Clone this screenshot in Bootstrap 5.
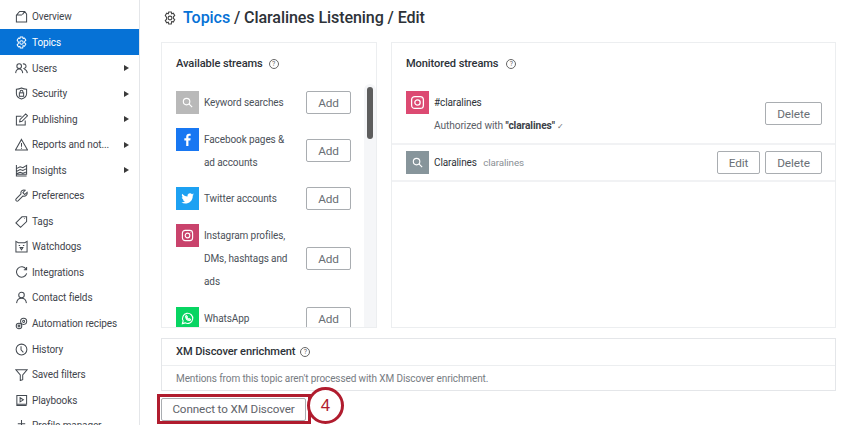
<!DOCTYPE html>
<html lang="en"><head><meta charset="utf-8"><title>Topics</title>
<link rel="stylesheet" href="https://cdn.jsdelivr.net/npm/bootstrap@5.3.0/dist/css/bootstrap.min.css">
<style>
html,body{height:425px;overflow:hidden}
body{font-family:Roboto,"Noto Sans",sans-serif;font-size:10px;color:#4b5159;background:#fff;letter-spacing:-.1px}
.shell{height:425px;position:relative}
.side{width:140px;flex:none;border-right:1px solid #e4e6e9;padding-top:3.7px;overflow:hidden}
.side-item{flex:none;height:25.55px;padding:1px 10px 0 15px;color:#3f454c;text-decoration:none;gap:4px;white-space:nowrap}
.side-item svg{width:13px;height:13px;flex:none;fill:none;stroke:#444a51;stroke-width:1.1}
.side-item.on{background:#0672d6;color:#fff}
.side-item.on svg{stroke:#fff}
.caret{width:0;height:0;border-left:5px solid #3a3a3a;border-top:3.5px solid transparent;border-bottom:3.5px solid transparent}
.workspace{padding:0 14px 0 21px;min-width:0}
.crumb{height:42px;gap:6px;font-size:16.1px;font-weight:500;color:#2d3238;padding-left:2px;padding-bottom:6px}
.crumb a{color:#0672d6;text-decoration:none}
.crumb svg{width:14px;height:14px;fill:none;stroke:#444;stroke-width:1.1}
.panes{height:286px;gap:14px}
.pane{border:1px solid #eceef0;background:#fff;min-width:0}
.pane-left{width:216px;flex:none;overflow:hidden}
.pane-right{flex:1}
.pane-title{font-size:11.1px;font-weight:500;color:#2d3238;gap:6px;height:20px}
.qmark{width:10px;height:10px;border:1px solid #666;border-radius:50%;font-size:7px;line-height:8px;text-align:center;color:#666;display:inline-block;font-weight:400;letter-spacing:0}
.qmark-near{margin-left:2px}
.stream-scroll{flex:1;padding:11px 0 0 14px;overflow:hidden;min-width:0}
.track{width:12px;flex:none;background:#f5f6f8;margin-top:41px;padding:3px 3px 0;border-radius:6px 6px 0 0}
.thumb{height:52px;border-radius:3px;background:#5d5d5d}
.stream-row{gap:5px;margin-bottom:13.7px;width:175px}
.glyph{width:23px;height:23px;flex:none}
.glyph svg{width:13px;height:13px;fill:none;stroke:#fff;stroke-width:1.2}
.g-gray{background:#b9b9b9}.g-fb{background:#1877f2}.g-tw{background:#1da1f2}.g-ig{background:#c9436c}.g-wa{background:#07d562}.g-ig2{background:#dc4a72}.g-slate{background:#87959b}
.stream-name{flex:1;line-height:23px;color:#4b5159;min-width:0}
.ghost{height:23px;padding:1px 0 0;border:1px solid #a9adb1;border-radius:2px;background:#fff;color:#6a6f75;font-size:11.8px;line-height:20px;flex:none;letter-spacing:-.1px}
.ghost:hover{background:#fff;color:#6a6f75;border-color:#a9adb1}
.w-add{width:45px}.w-del{width:57px}.w-edit{width:43px}
.mon-head{padding:11px 14px 0}
.mon-row{padding:0 13px 0 14px;border-bottom:2px solid #f1f2f4}
.mon-one{height:54px;margin-top:17px;gap:5px}
.mon-two{height:37px;padding-top:6px;gap:5px}
.mon-name{color:#2d3238;line-height:23px}
.mon-del{margin-top:11px}
.auth{font-size:10.2px;line-height:12px;margin-top:6px;color:#5b6067}
.auth b{font-weight:700;color:#3c4147}
.tick{font-size:8px;color:#6a6f75}
.muted-note{color:#8a8f95;font-size:9.8px;margin-left:4px}
.ig-big{width:15px!important;height:15px!important}
.list-top{margin-bottom:17px}
.enrich{border:1px solid #e4e6e9;margin-top:10px;height:53px}
.enrich-head{height:27px;border-bottom:1px solid #eceef0;padding:0 14px;font-size:11.1px;font-weight:500;color:#2d3238;gap:5px}
.enrich-body{padding:0 14px;height:25px;font-size:10px;color:#777c82}
.connect{margin-top:7px;width:145px;height:23px;border:1px solid #a9adb1;border-radius:2px;background:#fff;color:#5f646a;font-size:11.65px;letter-spacing:-.1px;padding:0;display:block}
.connect:hover{background:#fff;color:#5f646a;border-color:#a9adb1}
.callout-box{position:absolute;left:157px;top:394px;width:154px;height:30px;border:3px solid #b01c2e;pointer-events:none}
.callout-num{position:absolute;left:307px;top:387px;width:37px;height:37px;border:3px solid #b01c2e;border-radius:50%;background:#fff;color:#b01c2e;font-size:17px;line-height:32px;text-align:center;font-family:"Liberation Sans",sans-serif}
</style></head>
<body>
<div class="shell d-flex">
<nav class="side d-flex flex-column">
<a class="side-item d-flex align-items-center" href="#"><svg viewBox="0 0 14 14"><path d="M1.5 13V5.500L5 1.500h5.500l2 3V13zM1.500 5.500h6M10.500 1.500 8 5"/></svg>Overview</a>
<a class="side-item on d-flex align-items-center" href="#"><svg viewBox="0 0 14 14"><path d="M5.700 1h2.600l.4 1.800 1.600-.6 1.400 2.300-1.300 1.300v1.600l1.300 1.300-1.400 2.300-1.600-.6L8.300 13H5.700l-.4-1.800-1.600.6-1.400-2.300 1.300-1.300V6.400L2.300 4.500l1.400-2.300 1.600.6z"/><circle cx="7" cy="7" r="1.900"/></svg>Topics</a>
<a class="side-item d-flex align-items-center" href="#"><svg viewBox="0 0 14 14"><circle cx="4.500" cy="4.500" r="2.500"/><path d="M.7 12c.3-3 1.800-4.500 3.800-4.500S8 9 8.300 12M8.500 2.200a2.500 2.500 0 1 1 .5 4.800M10 7.800c1.800.4 3 1.900 3.300 4.200"/></svg>Users<span class="caret ms-auto"></span></a>
<a class="side-item d-flex align-items-center" href="#"><svg viewBox="0 0 14 14"><path d="M7 1c2 1 3.500 1.300 5.500 1.300V7c0 3-2.500 5-5.500 6-3-1-5.500-3-5.500-6V2.300C3.500 2.300 5 2 7 1z"/><rect x="4.700" y="6.300" width="4.600" height="3.700"/><path d="M5.500 6.300V5a1.500 1.500 0 0 1 3 0v1.300"/></svg>Security<span class="caret ms-auto"></span></a>
<a class="side-item d-flex align-items-center" href="#"><svg viewBox="0 0 14 14"><path d="M11 8v5H1.500V3.500H7M5 9.500l.5-2.500L11.500 1l2 2-6 6z"/></svg>Publishing<span class="caret ms-auto"></span></a>
<a class="side-item d-flex align-items-center" href="#"><svg viewBox="0 0 14 14"><path d="M7 1.500 13.500 13H.5zM7 5.500v4M7 10.500v1"/></svg>Reports and not...<span class="caret ms-auto"></span></a>
<a class="side-item d-flex align-items-center" href="#"><svg viewBox="0 0 14 14"><path d="M1.500 1v12h11M1.500 5l4-2 3 1 4-2.500v9.500h-11M1.500 8l4-2 3 1 4-2M1.500 10.500l4-1.500 3 1 4-1.500"/></svg>Insights<span class="caret ms-auto"></span></a>
<a class="side-item d-flex align-items-center" href="#"><svg viewBox="0 0 14 14"><path d="M13 3.500 10.500 6 8.500 4l2.500-2.700a3.300 3.300 0 0 0-4.500 4L1.200 10.700a1.500 1.500 0 0 0 2.100 2.100L8.700 7.500a3.300 3.300 0 0 0 4.300-4z"/></svg>Preferences</a>
<a class="side-item d-flex align-items-center" href="#"><svg viewBox="0 0 14 14"><path d="M1 8.500 7.500 2h5v5L6 13.200zM10.500 3.500l-.5.500"/></svg>Tags</a>
<a class="side-item d-flex align-items-center" href="#"><svg viewBox="0 0 14 14"><path d="M1 1.500 3.500 3h7L13 1.500V13H1zM4 6h1.500M8.500 6H10M5.500 8h3L7 10.500z"/></svg>Watchdogs</a>
<a class="side-item d-flex align-items-center" href="#"><svg viewBox="0 0 14 14"><path d="M12 3.500A5.600 5.600 0 1 0 12.600 8M12.500 1v3h-3"/></svg>Integrations</a>
<a class="side-item d-flex align-items-center" href="#"><svg viewBox="0 0 14 14"><circle cx="7" cy="4.300" r="3"/><path d="M1.700 13c.4-3.300 2.500-5.200 5.300-5.200s4.900 1.900 5.300 5.200"/></svg>Contact fields</a>
<a class="side-item d-flex align-items-center" href="#"><svg viewBox="0 0 14 14"><circle cx="9.300" cy="4.700" r="3.300"/><circle cx="9.300" cy="4.700" r="1.100"/><circle cx="4.300" cy="9.700" r="3"/><circle cx="4.300" cy="9.700" r="1"/></svg>Automation recipes</a>
<a class="side-item d-flex align-items-center" href="#"><svg viewBox="0 0 14 14"><circle cx="7" cy="7" r="5.800"/><path d="M6.500 3.500V7.300l2.500 2.700"/></svg>History</a>
<a class="side-item d-flex align-items-center" href="#"><svg viewBox="0 0 14 14"><path d="M1 2h12L8.300 7.500v5l-2.600 1V7.500z"/></svg>Saved filters</a>
<a class="side-item d-flex align-items-center" href="#"><svg viewBox="0 0 14 14"><path d="M2 1.500h10.500v9.500H2zM2 11v1.500h10.500M5.500 4l3.500 2.300-3.500 2.200z"/></svg>Playbooks</a>
<a class="side-item d-flex align-items-center" href="#"><svg viewBox="0 0 14 14"><path d="M7 1v12M3 5h8"/></svg>Profile manager</a>
</nav>
<main class="workspace flex-grow-1 d-flex flex-column">
<div class="crumb d-flex align-items-center"><svg viewBox="0 0 14 14"><path d="M5.700 1h2.600l.4 1.800 1.600-.6 1.400 2.300-1.300 1.300v1.600l1.300 1.300-1.400 2.300-1.600-.6L8.300 13H5.700l-.4-1.800-1.600.6-1.400-2.300 1.300-1.300V6.400L2.300 4.500l1.400-2.300 1.600.6z"/><circle cx="7" cy="7" r="1.900"/></svg><span><a href="#">Topics</a> / Claralines Listening / Edit</span></div>
<div class="panes d-flex">
<section class="pane pane-left d-flex">
<div class="stream-scroll">
<div class="pane-title list-top d-flex align-items-center">Available streams <span class="qmark">?</span></div>
<div class="stream-row d-flex align-items-center"><span class="glyph g-gray d-flex align-items-center justify-content-center align-self-start"><svg viewBox="0 0 14 14"><circle cx="6" cy="6" r="3.500"/><path d="m8.500 8.500 3.500 3.500"/></svg></span><span class="stream-name">Keyword searches</span><button class="btn ghost w-add">Add</button></div>
<div class="stream-row d-flex align-items-center"><span class="glyph g-fb d-flex align-items-center justify-content-center align-self-start"><svg viewBox="0 0 14 14"><path d="M8 14V8h2l.4-2.400H8V4.200c0-.8.300-1.200 1.200-1.200h1.200V.9C10 .8 9.400.7 8.700.7 6.800.7 5.600 1.900 5.600 4v1.600H3.600V8h2v6z" fill="#fff" stroke="none"/></svg></span><span class="stream-name">Facebook pages &amp;<br>ad accounts</span><button class="btn ghost w-add">Add</button></div>
<div class="stream-row d-flex align-items-center"><span class="glyph g-tw d-flex align-items-center justify-content-center align-self-start"><svg viewBox="0 0 14 14"><path d="M14 2.700c-.5.200-1 .4-1.600.4.600-.3 1-.9 1.200-1.500-.5.300-1.100.5-1.800.7a2.800 2.800 0 0 0-4.800 2.500C4.700 4.700 2.700 3.600 1.300 1.900c-.7 1.300-.4 2.900.9 3.700-.5 0-.9-.1-1.300-.3 0 1.300 1 2.500 2.300 2.800-.4.100-.9.100-1.300 0 .4 1.100 1.400 1.900 2.600 1.900A5.700 5.700 0 0 1 .3 11.200c4.600 2.800 12.500.8 12.400-7.500.5-.3 1-.6 1.300-1z" fill="#fff" stroke="none"/></svg></span><span class="stream-name">Twitter accounts</span><button class="btn ghost w-add">Add</button></div>
<div class="stream-row d-flex align-items-center"><span class="glyph g-ig d-flex align-items-center justify-content-center align-self-start"><svg viewBox="0 0 14 14"><rect x="1.500" y="1.500" width="11" height="11" rx="3"/><circle cx="7" cy="7" r="2.500"/><path d="M10.300 3.500v.2"/></svg></span><span class="stream-name">Instagram profiles,<br>DMs, hashtags and<br>ads</span><button class="btn ghost w-add">Add</button></div>
<div class="stream-row d-flex align-items-center"><span class="glyph g-wa d-flex align-items-center justify-content-center align-self-start"><svg viewBox="0 0 14 14"><path d="M1.500 12.500 2.300 9.500A5.500 5.500 0 1 1 4.500 11.700zM5 4.500c0 2.500 2 4.500 4.500 4.700l.7-1.200-1.400-.8-.6.500C7.400 7.400 6.600 6.600 6.300 6l.6-.6L6 4z"/></svg></span><span class="stream-name">WhatsApp</span><button class="btn ghost w-add">Add</button></div>
</div>
<div class="track"><div class="thumb"></div></div>
</section>
<section class="pane pane-right">
<div class="mon-head"><div class="pane-title d-flex align-items-center">Monitored streams <span class="qmark qmark-near">?</span></div></div>
<div class="mon-row mon-one d-flex align-items-start"><span class="glyph g-ig2 d-flex align-items-center justify-content-center"><svg class="ig-big" viewBox="0 0 14 14"><rect x="1.500" y="1.500" width="11" height="11" rx="3"/><circle cx="7" cy="7" r="2.500"/><path d="M10.300 3.500v.2"/></svg></span><div class="flex-grow-1"><div class="mon-name">#claralines</div><div class="auth">Authorized with <b>"claralines"</b> <span class="tick">✓</span></div></div><button class="btn ghost w-del mon-del">Delete</button></div>
<div class="mon-row mon-two d-flex align-items-start"><span class="glyph g-slate d-flex align-items-center justify-content-center"><svg viewBox="0 0 14 14"><circle cx="6" cy="6" r="3.500"/><path d="m8.500 8.500 3.500 3.500"/></svg></span><div class="mon-name flex-grow-1">Claralines <span class="muted-note">claralines</span></div><button class="btn ghost w-edit">Edit</button><button class="btn ghost w-del">Delete</button></div>
</section>
</div>
<section class="enrich">
<div class="enrich-head d-flex align-items-center">XM Discover enrichment <span class="qmark">?</span></div>
<div class="enrich-body d-flex align-items-center">Mentions from this topic aren't processed with XM Discover enrichment.</div>
</section>
<button class="btn connect">Connect to XM Discover</button>
</main>
<div class="callout-box"></div><div class="callout-num">4</div>
</div>
</body></html>
